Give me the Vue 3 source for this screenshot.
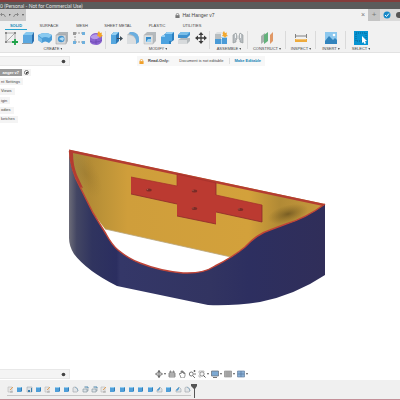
<script setup>
const tabs = [
  { name: 'SOLID', width: 32 },
  { name: 'SURFACE', width: 34 },
  { name: 'MESH', width: 32 },
  { name: 'SHEET METAL', width: 40 },
  { name: 'PLASTIC', width: 38 },
  { name: 'UTILITIES', width: 32 }
]
const groups = [
  { name: 'CREATE', icons: ['sketch', 'extrude', 'revolve', 'hole', 'pattern', 'form'] },
  { name: 'MODIFY', icons: ['presspull', 'fillet', 'shell', 'combine', 'split', 'move'] },
  { name: 'ASSEMBLE', icons: ['component', 'joint'] },
  { name: 'CONSTRUCT', icons: ['plane'] },
  { name: 'INSPECT', icons: ['measure'] },
  { name: 'INSERT', icons: ['image'] },
  { name: 'SELECT', icons: ['select'] }
]
const tree = ['nt Settings', 'Views', 'igin', 'odies', 'ketches']
const nav = [
  { icon: 'orbit', name: 'Orbit', caret: true },
  { icon: 'look', name: 'Look at', caret: false },
  { icon: 'pan', name: 'Pan', caret: false },
  { icon: 'zoom', name: 'Zoom', caret: false },
  { icon: 'fit', name: 'Fit', caret: true },
  { icon: 'display', name: 'Display settings', caret: true },
  { icon: 'grid', name: 'Grid and snaps', caret: true },
  { icon: 'viewports', name: 'Viewports', caret: true }
]
const features = [
  'tsketch', 'tbox', 'tplane', 'tbox', 'tsketch', 'tbox', 'tbox', 'tfillet', 'tcopy', 'tcopy',
  'tsketch', 'tbox', 'tbox', 'tbox', 'tbox', 'tbox', 'tcham', 'tbox', 'tcham', 'tfillet'
]
</script>

<template>
  <div class="app">
    <svg class="defs" aria-hidden="true">
      <symbol id="sketch" viewBox="0 0 14 14">
        <path d="M2 2h9v8M2 2v9h6M3 10 10 3" fill="none" stroke="#9a9a9a" stroke-width=".8" />
        <path d="M1 1h2v2H1zM10 1h2v2h-2zM1 10h2v2H1z" fill="#888" />
        <path d="M11 8v6M8 11h6" stroke="#20a34a" stroke-width="1.800" />
      </symbol>
      <symbol id="extrude" viewBox="0 0 14 14">
        <path d="M2 4 5 1h8l-2 3z" fill="#86c8ef" />
        <path d="M2 4h9v9H2z" fill="#5ba8e0" />
        <path d="m11 4 2-3v9l-2 3z" fill="#2a6fae" />
        <path d="M1 12h9v1H1z" fill="#8f9aa2" />
      </symbol>
      <symbol id="revolve" viewBox="0 0 14 14">
        <path d="M0 4Q7 0 14 4v5l-3 3q-4-3-7 0L0 9z" fill="#4c9dd6" />
        <path d="M0 4Q7 0 14 4l-3 3Q7 5 4 7z" fill="#8acaf0" />
        <path d="m0 5 4 3v4L0 9z" fill="#79bdea" />
      </symbol>
      <symbol id="hole" viewBox="0 0 14 14">
        <path d="m1 4 3-3h9v9l-2 3H1z" fill="#aeb3b6" />
        <path d="M1 4h10v9H1z" fill="#d5d8da" stroke="#999" stroke-width=".5" />
        <circle cx="6.200" cy="8" r="3.300" fill="#4395cf" />
        <path d="M4 8q3-3 5-1l-1 3z" fill="#b5dcf3" />
      </symbol>
      <symbol id="pattern" viewBox="0 0 14 14">
        <path d="M3 2h8M3 2v9h8" fill="none" stroke="#888" stroke-width=".8" stroke-dasharray="2 1" />
        <path d="M1 1h3v3H1z" fill="#999" />
        <path d="M10 1h3v3h-3zM1 10h3v3H1zM10 10h3v3h-3z" fill="#6fb0dd" />
      </symbol>
      <symbol id="form" viewBox="0 0 14 14">
        <path d="M1 6q2-4 6-4 6 0 6 4v4q-1 3-5 4-6 0-7-3z" fill="#8a63cf" />
        <path d="M1 6q5-5 11-1L8 8Q4 9 1 6z" fill="#b79bea" />
        <path d="M7 8v5M1 10q3 2 6 1 4 0 6-2" fill="none" stroke="#6542ab" stroke-width=".6" />
        <path d="m10 0 1 2 2-.5L12.500 3.500 14 5l-2 .5-1 1.500-1-1.500L8 5l1-1.500L8.500 2z" fill="#f5a623" />
      </symbol>
      <symbol id="presspull" viewBox="0 0 14 14">
        <path d="m2 4 3-3h5v9l-3 3H2z" fill="#2c78b5" />
        <path d="M2 4h5v9H2z" fill="#55a7df" />
        <path d="m2 4 3-3h5L7 4z" fill="#93d0f3" />
        <path d="M8 7h3V5l3 2.500L11 10V8H8z" fill="#3d4c57" />
      </symbol>
      <symbol id="fillet" viewBox="0 0 14 14">
        <path d="m1 4 3-3h3q6 1 6 8v2l-3 2H1z" fill="#b8bdc0" />
        <path d="M4 1h3q6 1 6 8v2l-3 2V9Q9 4 3 3z" fill="#6aaee0" />
        <path d="M1 4q8 0 9 6v3H1z" fill="#dbdee0" />
      </symbol>
      <symbol id="shell" viewBox="0 0 14 14">
        <path d="m1 4 3-3h9v9l-3 3H1z" fill="#b5babd" />
        <path d="M1 4h9v9H1z" fill="#dde0e2" stroke="#aaa" stroke-width=".4" />
        <path d="M3 6h5v5H3z" fill="#348bc9" />
        <path d="m3 11 2-3h3v3z" fill="#9dd2f2" />
      </symbol>
      <symbol id="combine" viewBox="0 0 14 14">
        <path d="m5 3 2-2h7v8l-3 2v2H1V6z" fill="#2a7fc0" />
        <path d="M5 3h7v7H9v3H1V6h4z" fill="#4ba2df" />
        <path d="m5 3 2-2h7l-2 2zM1 6l2-2h2v2z" fill="#91cef4" />
      </symbol>
      <symbol id="split" viewBox="0 0 14 14">
        <path d="m1 4 3-3h9v3l-3 3H1z" fill="#3f92cf" />
        <path d="m1 4 3-3h9l-3 3z" fill="#79bee9" />
        <path d="m1 9 3-2h9v3l-3 3H1z" fill="#b4babd" />
        <path d="M1 9h9v4H1z" fill="#d7dadc" />
      </symbol>
      <symbol id="move" viewBox="0 0 14 14">
        <path d="M7 2v10M2 7h10" stroke="#3e3e3e" stroke-width="1.300" />
        <path d="m7 1 2.500 3h-5zM7 13l2.500-3h-5zM1 7l3-2.500v5zM13 7l-3-2.500v5z" fill="#3e3e3e" />
      </symbol>
      <symbol id="component" viewBox="0 0 14 14">
        <path d="M1 3h6v5H1z" fill="#b8bec1" />
        <path d="m1 3 2-2h5L7 3z" fill="#dde0e1" />
        <path d="M1 8h6v5H1zM8 7h5v6H8z" fill="#4a9bd7" />
        <path d="M7 6h6v1H7zM7 8h1v5H7z" fill="#a5d5f3" />
        <path d="m10 0 1 2 2-.5L12.500 3.500 14 5l-2 .5-1 1.500-1-1.500L8 5l1-1.500L8.500 2z" fill="#f3a92f" />
      </symbol>
      <symbol id="joint" viewBox="0 0 14 14">
        <path d="m2 4 3-2 1 3v3l-1 1v2l-3 1zM12 4 9 2 8 5v3l1 1v2l3 1z" fill="#b7bcc0" stroke="#8d9396" stroke-width=".6" />
        <path d="M4.500 3v4M9.500 3v4" stroke="#eff1f2" />
      </symbol>
      <symbol id="plane" viewBox="0 0 14 14">
        <path d="m1 5 4-3v8l-4 3z" fill="#a9b0ae" />
        <path d="m4 4 4-3v9l-4 3z" fill="#63b17b" />
        <path d="m10 4 3-3v9l-3 3z" fill="#e09866" />
      </symbol>
      <symbol id="measure" viewBox="0 0 14 14">
        <path d="M2 5h10M1.500 3v4M12.500 3v4" stroke="#666" stroke-width=".8" />
        <path d="M1 8h12v3H1z" fill="#edaa3c" />
        <path d="M3 8v1M5 8v1M7 8v1M9 8v1M11 8v1" stroke="#fff" stroke-width=".6" />
      </symbol>
      <symbol id="image" viewBox="0 0 14 14">
        <path d="M1 1h12v12H1z" fill="#8dc8ee" />
        <path d="m1 10 4-5 4 4 2-2 2 2v4H1z" fill="#3284bd" />
        <circle cx="10" cy="4" r="1.300" fill="#fff" />
      </symbol>
      <symbol id="select" viewBox="0 0 14 14">
        <path d="M0 0h14v14H0z" fill="#0794d2" />
        <path d="M2 2h10v8H2z" fill="none" stroke="#07517b" stroke-width=".7" stroke-dasharray="1 1" />
        <path d="m8 5 5 5-2 .3 1 2-1.500.7-1-2L8 12z" fill="#fff" />
      </symbol>

      <symbol id="orbit" viewBox="0 0 8 8">
        <path d="M4 0v8M0 4h8" stroke="#777" stroke-width=".8" />
        <ellipse cx="4" cy="4" rx="3" ry="1.600" fill="none" stroke="#777" stroke-width=".8" />
        <path d="m4 0 1.500 2h-3zM4 8l1.500-2h-3z" fill="#666" />
      </symbol>
      <symbol id="look" viewBox="0 0 8 8">
        <path d="M1 3h6v4H1zM2 3V1h1v2M5 3V1h1v2M1 5h6" fill="#d5d5d5" stroke="#777" stroke-width=".8" />
      </symbol>
      <symbol id="pan" viewBox="0 0 8 8">
        <path d="M2 5 1 4l1-1 1 1V1h1v2-2h1v2-1h1v2-1h1v3L6 8H3z" fill="#fff" stroke="#555" stroke-width=".6" />
      </symbol>
      <symbol id="zoom" viewBox="0 0 8 8">
        <circle cx="3.300" cy="4" r="2" fill="#fff" stroke="#555" stroke-width=".8" />
        <path d="m5 6 2 2M5.500 1h2M6.500 0v2M6 4h2" stroke="#555" stroke-width=".8" />
      </symbol>
      <symbol id="fit" viewBox="0 0 8 8">
        <path d="M1 3V1h5v1M1 5v2h2" fill="none" stroke="#999" stroke-width=".6" />
        <circle cx="4" cy="4" r="2.200" fill="#f6f6f6" stroke="#666" stroke-width=".7" />
        <path d="m5.500 5.500 2 2" stroke="#555" />
      </symbol>
      <symbol id="display" viewBox="0 0 8 8">
        <path d="M.5 1h7v5h-7z" fill="#7ca9d3" stroke="#6b7580" stroke-width=".8" />
        <path d="M2 7.500h4" stroke="#777" />
      </symbol>
      <symbol id="grid" viewBox="0 0 8 8">
        <path d="M.5 1h7v6h-7z" fill="#b2b2b2" stroke="#888" stroke-width=".6" />
        <path d="M0 3h8M0 5h8M3 1v6M5 1v6" stroke="#888" stroke-width=".4" />
      </symbol>
      <symbol id="viewports" viewBox="0 0 8 8">
        <path d="M.5 1h7v6h-7z" fill="#8aafd4" stroke="#6783a1" stroke-width=".7" />
        <path d="M4 1v6M.5 4h7" stroke="#5c7ea4" stroke-width=".8" />
      </symbol>

      <symbol id="tsketch" viewBox="0 0 7 7">
        <path d="M1 1h4v5H1z" fill="#e6e6e6" stroke="#bbb" stroke-width=".6" />
        <path d="m3 4 3-3" stroke="#e5a35b" />
        <path d="M3 6h3" stroke="#888" stroke-width=".6" />
      </symbol>
      <symbol id="tbox" viewBox="0 0 7 7">
        <path d="m1 2 1-1h4v4L5 6H1z" fill="#2f7db7" />
        <path d="M1 2h4v4H1z" fill="#4f9fd9" />
        <path d="m1 2 1-1h4L5 2z" fill="#95cdf0" />
      </symbol>
      <symbol id="tplane" viewBox="0 0 7 7">
        <path d="M1 1h5v5H1z" fill="#dce1e5" stroke="#929ba1" stroke-width=".5" />
        <path d="M2 4h2v2H2zM5 2h1v4H5z" fill="#3c7fac" />
      </symbol>
      <symbol id="tfillet" viewBox="0 0 7 7">
        <path d="M1 2q0-1 2-1 3 1 3 4l-1 1H1z" fill="#e3e6e8" stroke="#9aa0a4" stroke-width=".6" />
        <path d="M3 1q3 1 3 4" fill="none" stroke="#6f9fc0" stroke-width=".6" />
      </symbol>
      <symbol id="tcopy" viewBox="0 0 7 7">
        <path d="M2 1h4v4H5M1 3h4v3H1z" fill="#dde4e9" stroke="#7e8d98" stroke-width=".6" />
        <path d="M3 1h3v1" stroke="#378cc2" stroke-width=".6" fill="none" />
      </symbol>
      <symbol id="tcham" viewBox="0 0 7 7">
        <path d="m1 4 3-3 2 2v3H1z" fill="#dfe4e7" stroke="#929a9e" stroke-width=".5" />
        <path d="m1 4 3-3v2L2 5z" fill="#4b9bd3" />
      </symbol>
      <symbol id="lock" viewBox="0 0 6 6">
        <path d="M1.500 3V2q0-1.500 1.500-1.500T4.500 2v1" fill="none" stroke="currentColor" stroke-width=".9" />
        <path d="M.5 2.600h5V6h-5z" fill="currentColor" />
      </symbol>
      <symbol id="pin" viewBox="0 0 6 6">
        <circle cx="3" cy="3" r="2.200" fill="#444" />
      </symbol>
    </svg>

    <header class="titlebar">0 (Personal - Not for Commercial Use)</header>

    <div class="docbar">
      <div class="quick">
        <button aria-label="Undo"><svg viewBox="0 0 6 6"><path d="m2 1-1.500 1.500L2 4M1 2.500h3L5.500 5" /></svg></button>
        <span class="caret"></span>
        <button aria-label="Redo"><svg viewBox="0 0 6 6"><path d="m4 1 1.500 1.500L4 4M5 2.500H2L.5 5" /></svg></button>
        <span class="caret"></span>
      </div>
      <div class="doctab">
        <svg class="lock"><use href="#lock" /></svg>
        <span>Hat Hanger v7</span>
      </div>
      <button class="close" aria-label="Close document">×</button>
      <button class="plus" aria-label="New design">+</button>
      <div class="status">
        <button aria-label="Extensions"><svg viewBox="0 0 8 8"><circle cx="4" cy="4" r="3.500" fill="#1689c8" /><path d="m2 4 1.500 1.500L6 2.500" fill="none" stroke="#fff" /></svg></button>
        <button aria-label="Job status"><svg viewBox="0 0 8 8"><circle cx="4" cy="4" r="3" fill="#555" /></svg></button>
      </div>
    </div>

    <nav class="tabs">
      <a v-for="(tab, i) in tabs" :key="tab.name" href="#" :class="{ active: i === 0 }" :style="{ width: tab.width + 'px' }"><span>{{ tab.name }}</span></a>
    </nav>

    <div class="toolbar">
      <section v-for="group in groups" :key="group.name" class="group" :class="group.name.toLowerCase()">
        <div class="tools">
          <button v-for="icon in group.icons" :key="icon" :aria-label="icon"><svg><use :href="'#' + icon" /></svg></button>
        </div>
        <button class="menu">{{ group.name }}<span class="caret"></span></button>
      </section>
    </div>

    <main class="canvas">
      <svg class="model" viewBox="0 53 400 327" role="img" aria-label="Hat hanger model">
        <defs>
          <linearGradient id="blue" x1="69" x2="325" y1="0" y2="0" gradientUnits="userSpaceOnUse">
            <stop offset="0" stop-color="#6c6c78" />
            <stop offset=".03" stop-color="#434663" />
            <stop offset=".09" stop-color="#30345f" />
            <stop offset=".185" stop-color="#2b2e60" />
            <stop offset=".2" stop-color="#343768" />
            <stop offset=".55" stop-color="#323461" />
            <stop offset=".7" stop-color="#2d2f60" />
            <stop offset="1" stop-color="#302e59" />
          </linearGradient>
          <linearGradient id="yellow" x1="72" x2="325" y1="0" y2="0" gradientUnits="userSpaceOnUse">
            <stop offset="0" stop-color="#a88a40" />
            <stop offset=".07" stop-color="#b38b35" />
            <stop offset=".13" stop-color="#be9438" />
            <stop offset=".22" stop-color="#cf9e3b" />
            <stop offset=".7" stop-color="#d3a13b" />
            <stop offset=".82" stop-color="#b18a35" />
            <stop offset="1" stop-color="#c99a3e" />
          </linearGradient>
          <radialGradient id="shade"><stop offset="0" stop-color="#5f4a1c" stop-opacity=".7" /><stop offset="1" stop-color="#7b6122" stop-opacity="0" /></radialGradient>
        </defs>
        <path d="M70 150 325 204Q306 218 286 224L270 230Q257 234 245 247L231 257 105 229 93 213 80 187Q71 171 70 150z" fill="url(#yellow)" />
        <ellipse cx="288" cy="214" rx="21" ry="9" fill="url(#shade)" transform="rotate(-15 288 214)" />
        <ellipse cx="86" cy="174" rx="12" ry="26" fill="url(#shade)" opacity=".25" transform="rotate(-28 86 174)" />
        <path d="m105 229 126 28" stroke="#b9a57a" stroke-width=".8" />
        <path d="M69 151Q71 171 80 187L93 213 106 234Q112 245 118 250 129 259 140 263 160 271 183 273 203 274 215 266 233 257 245 247 257 234 270 230L286 224Q306 218 325 204V275Q295 295 260 302 233 306 208 305L117 286Q87 271 74 254 69 246 69 238z" fill="url(#blue)" />
        <path d="M69.500 151Q71 171 80 187L93 213 106 234Q112 245 118 250 129 259 140 263 160 271 183 273 203 274 215 266 233 257 245 247 257 234 270 230L286 224Q306 218 325 204" fill="none" stroke="#bf4437" stroke-width="1.500" />
        <path d="m69 149.500 256 54.500-2 2L73 153q0 12 4 22l6 13-3-1q-11-20-11-37.500z" fill="#b43c31" />
        <path d="m131 177 46 9v-12l39 9v12l46 10v17l-46-10v12l-39-8v-12l-46-10z" fill="#bb3a31" />
        <path d="m131 194 46 10m0 12 39 8m0-12 46 10v-17m-46-10v-12" fill="none" stroke="#8c2b2b" stroke-width=".8" />
        <path d="m131 177 46 9v-12l39 9m0 12 46 10" fill="none" stroke="#a32e2b" stroke-width=".7" />
        <g fill="#7a2c27">
          <ellipse cx="149" cy="190" rx="2.800" ry="1.600" />
          <ellipse cx="194.500" cy="191" rx="2.800" ry="1.600" />
          <ellipse cx="194.500" cy="208.500" rx="2.800" ry="1.600" />
          <ellipse cx="240.500" cy="209.500" rx="2.800" ry="1.600" />
        </g>
        <g fill="#a9584c">
          <circle cx="147.500" cy="189.500" r=".7" />
          <circle cx="193" cy="190.500" r=".7" />
          <circle cx="193" cy="208" r=".7" />
          <circle cx="239" cy="209" r=".7" />
        </g>
      </svg>

      <div class="overlay">
        <aside class="side">
          <div class="panel"><button aria-label="Browser options"><svg><use href="#pin" /></svg></button></div>
          <ul class="tree">
            <li class="root">
              <button>anger v7</button>
              <label><input type="radio" name="active" checked aria-label="Activate component" /></label>
            </li>
            <li v-for="item in tree" :key="item"><button>{{ item }}</button></li>
          </ul>
        </aside>
        <div class="banner">
          <svg class="lock"><use href="#lock" /></svg>
          <strong>Read-Only:</strong>
          <span class="message">Document is not editable</span>
          <a href="#">Make Editable</a>
        </div>
      </div>

      <div class="bottom">
        <div class="panel"><button aria-label="Comments"><svg><use href="#pin" /></svg></button></div>
        <div class="viewnav">
          <button v-for="item in nav" :key="item.icon" :aria-label="item.name"><svg><use :href="'#' + item.icon" /></svg><span v-if="item.caret" class="caret"></span></button>
        </div>
      </div>
    </main>

    <footer class="timeline">
      <div class="track">
        <button v-for="(icon, i) in features" :key="i" :aria-label="'Feature ' + (i + 1)"><svg><use :href="'#' + icon" /></svg></button>
      </div>
      <svg class="marker" viewBox="0 0 6 14"><path d="M0 0h6v2L4 5v9H3V5L0 2z" fill="#555" /></svg>
    </footer>
  </div>
</template>

<style>
body {
  margin: 0;
}
</style>

<style scoped>
* {
  box-sizing: border-box;
}
.app {
  display: flex;
  flex-direction: column;
  min-height: 100vh;
  overflow: hidden;
  background: #fff;
  color: #444;
  font-family: "Liberation Sans", Arial, sans-serif;
  font-size: 4px;
  line-height: 6px;
}
.defs {
  position: absolute;
  width: 0;
  height: 0;
}
svg {
  display: block;
  flex: none;
}
button {
  display: flex;
  align-items: center;
  padding: 0;
  border: 0;
  background: none;
  color: inherit;
  font: inherit;
  white-space: nowrap;
}
a {
  color: inherit;
  text-decoration: none;
}
.caret {
  flex: none;
  width: 2px;
  height: 2px;
  background: #555;
  clip-path: polygon(0 0, 100% 0, 50% 100%);
}
.titlebar {
  display: flex;
  align-items: center;
  height: 9px;
  border-top: 2px solid #843c3b;
  background: #5b5b5b;
  color: #e6e6e6;
  font-family: Lato, sans-serif;
  font-size: 5px;
  white-space: nowrap;
}
.docbar {
  display: flex;
  height: 12px;
  background: #f1f1f1;
}
.quick {
  display: flex;
  align-items: center;
  justify-content: space-between;
  width: 26px;
  padding-right: 2px;
  background: #c9c9c9;
}
.quick svg {
  width: 6px;
  height: 6px;
  fill: none;
  stroke: #888;
  stroke-width: 1px;
}
.doctab {
  display: flex;
  flex: 1;
  align-items: center;
  justify-content: center;
  gap: 2px;
  padding-left: 6px;
  font-size: 5px;
}
.lock {
  width: 5px;
  height: 5px;
  color: #777;
}
.close,
.plus {
  justify-content: center;
  width: 10px;
  color: #777;
  font-size: 7px;
}
.plus {
  width: 12px;
  background: #c4c4c4;
  font-size: 8px;
}
.status {
  display: flex;
  align-items: center;
  gap: 4px;
  width: 20px;
  padding-left: 3px;
  overflow: hidden;
  background: #dadada;
}
.status svg {
  width: 8px;
  height: 8px;
}
.tabs {
  display: flex;
  height: 9px;
  background: #f1f1f1;
}
.tabs a {
  display: flex;
  justify-content: center;
  padding-top: 2px;
  white-space: nowrap;
}
.tabs .active {
  color: #1689b8;
  font-weight: bold;
}
.active span {
  padding: 0 5px;
  border-bottom: 1px solid #27a3cf;
}
.toolbar {
  display: flex;
  height: 23px;
  border-bottom: 1px solid #e2e2e2;
  background: #f1f1f1;
}
.group {
  display: flex;
  flex-direction: column;
  align-items: center;
  gap: 1px;
  width: 30px;
  padding-top: 1px;
  background: linear-gradient(#dadada, #dadada) right 1px / 1px 18px no-repeat;
}
.create {
  width: 106px;
}
.modify {
  width: 104px;
}
.assemble,
.construct {
  width: 38px;
}
.select {
  background: none;
}
.tools {
  display: flex;
  gap: 3px;
}
.tools svg {
  width: 14px;
  height: 14px;
}
.menu {
  gap: 1px;
}
.canvas {
  position: relative;
  display: flex;
  flex: 1;
  flex-direction: column;
  justify-content: space-between;
  padding: 3px 0 1px;
}
.model {
  position: absolute;
  inset: 0;
  width: 100%;
  height: 100%;
}
.overlay,
.bottom {
  position: relative;
  display: flex;
}
.overlay {
  gap: 67px;
}
.bottom {
  gap: 85px;
}
.side {
  width: 70px;
}
.panel {
  display: flex;
  justify-content: flex-end;
  width: 70px;
  height: 10px;
  padding-right: 3px;
  border: 1px solid #e8e8e8;
  border-left: 0;
  background: #f4f4f4;
}
.panel svg {
  width: 5px;
  height: 5px;
}
.tree {
  display: flex;
  flex-direction: column;
  justify-content: space-between;
  min-height: 54px;
  margin: 3px 0 0;
  padding: 0;
  list-style: none;
}
.tree li {
  display: flex;
  height: 7px;
}
.tree button {
  padding: 0 3px 0 1px;
  background: #f4f4f4;
}
.tree .root button {
  justify-content: flex-end;
  width: 22px;
  background: #999;
  color: #fff;
  font-weight: bold;
}
.tree label {
  display: flex;
  align-items: center;
  padding: 0 2px;
  background: #f4f4f4;
}
.tree input {
  width: 5px;
  height: 5px;
  margin: 0;
  border: 1px solid #777;
  border-radius: 50%;
  appearance: none;
  background: radial-gradient(#444 1px, #fff 1px);
}
.banner {
  display: flex;
  align-items: center;
  height: 10px;
  padding: 0 4px 0 2px;
  background: #f7f7f7;
  white-space: nowrap;
}
.banner .lock {
  margin-right: 4px;
  color: #f0a02b;
}
.banner .message {
  margin: 0 6px 0 10px;
}
.banner a {
  padding-left: 4px;
  border-left: 1px solid #ddd;
  color: #1683b5;
  font-weight: bold;
}
.viewnav {
  display: flex;
  align-items: center;
  gap: 2px;
}
.viewnav button {
  gap: 1px;
}
.viewnav svg {
  width: 8px;
  height: 8px;
}
.timeline {
  display: flex;
  height: 20px;
  padding: 4px 7px 0;
  border-bottom: 1px solid #c58f98;
  background: #f0f0f0;
}
.track {
  display: flex;
  flex: none;
  justify-content: space-between;
  width: 184px;
  height: 12px;
  padding-bottom: 1px;
  border-bottom: 1px solid #c6c6c6;
}
.track svg {
  width: 7px;
  height: 7px;
}
.marker {
  width: 6px;
  height: 14px;
}
</style>
